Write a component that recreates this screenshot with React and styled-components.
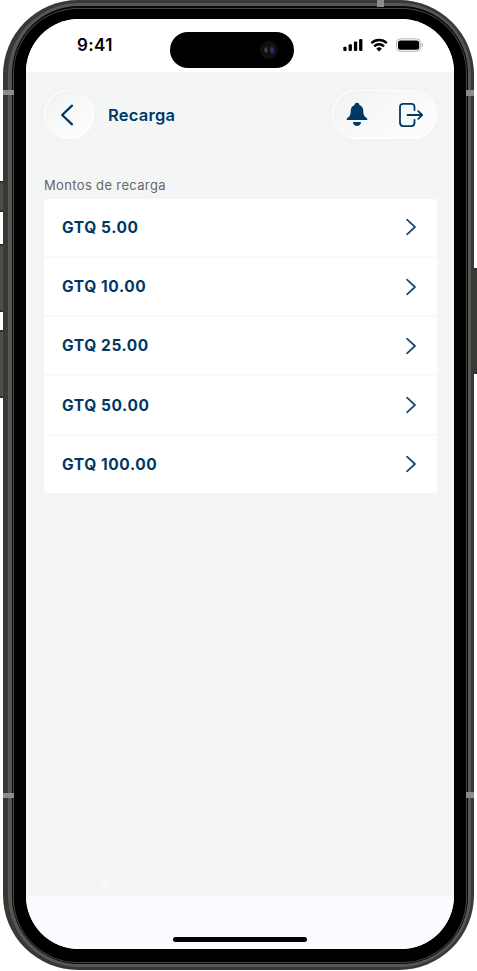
import React from "react";
import styled, { createGlobalStyle } from "styled-components";

const amounts = ["5.00", "10.00", "25.00", "50.00", "100.00"];

export default function App() {
  return (
    <Stage>
      <GlobalStyle />
      <SideButton $side="left" $top={181} $height={31} />
      <SideButton $side="left" $top={244} $height={68} />
      <SideButton $side="left" $top={330} $height={68} />
      <SideButton $side="right" $top={268} $height={106} />
      <Frame>
        <Rim>
          <Groove>
            <Line>
              <Bezel>
                <Screen>
                  <StatusBar>
                    <Clock>9:41</Clock>
                    <Island>
                      <Camera />
                    </Island>
                    <StatusIcons />
                  </StatusBar>
                  <Content>
                    <Header>
                      <BackButton aria-label="Regresar">
                        <svg width="14" height="22" viewBox="0 0 14 22" fill="none" stroke="#003865" strokeWidth="2.3" strokeLinecap="round" strokeLinejoin="round">
                          <path d="M12 1.700 2.200 11l9.800 9.300" />
                        </svg>
                      </BackButton>
                      <Title>Recarga</Title>
                      <Actions>
                        <BellIcon />
                        <LogoutIcon />
                      </Actions>
                    </Header>
                    <Label>Montos de recarga</Label>
                    <List>
                      {amounts.map((amount) => (
                        <Row key={amount}>
                          GTQ {amount}
                          <svg width="12" height="18" viewBox="0 0 12 18" fill="none" stroke="#164672" strokeWidth="1.7" strokeLinecap="round" strokeLinejoin="round">
                            <path d="m2 1.700 8 7.300-8 7.300" />
                          </svg>
                        </Row>
                      ))}
                    </List>
                    <Dot />
                  </Content>
                  <Footer>
                    <HomeBar />
                  </Footer>
                </Screen>
              </Bezel>
            </Line>
          </Groove>
        </Rim>
      </Frame>
      <Antenna $x={3} $y={90} $w={11} $h={5} />
      <Antenna $x={3} $y={793} $w={11} $h={5} />
      <Antenna $x={466} $y={90} $w={8} $h={6} />
      <Antenna $x={466} $y={792} $w={8} $h={6} />
      <Antenna $x={377} $y={0} $w={7} $h={7} />
    </Stage>
  );
}

const StatusIcons = () => (
  <StatusSvg width="82" height="16" viewBox="0 0 82 16">
    <rect x="0.3" y="8.7" width="3.3" height="4.4" rx="1" />
    <rect x="5.6" y="6.2" width="3.3" height="6.9" rx="1" />
    <rect x="10.9" y="3.5" width="3.3" height="9.6" rx="1" />
    <rect x="16.1" y="0.9" width="3.3" height="12.2" rx="1" />
    <g fill="none" stroke="#000" strokeWidth="2.4">
      <path d="M28.4 5.1a11 11 0 0 1 15.4 0" />
      <path d="M31.2 8.3a7 7 0 0 1 9.8 0" />
    </g>
    <path d="M36.1 13.4 33.3 10.7a4 4 0 0 1 5.6 0Z" />
    <rect x="53.5" y="0.9" width="24.200" height="12.4" rx="3.900" fill="none" stroke="#b5b5b5" />
    <rect x="55" y="2.4" width="21.2" height="9.4" rx="2.500" />
    <path d="M78.900 5v4.300c1.300-.5 1.300-3.800 0-4.300Z" fill="#aaa" />
  </StatusSvg>
);

const BellIcon = () => (
  <svg width="22" height="25" viewBox="0 0 22 25" fill="#003865">
    <path d="M11 .8c1.300 0 2.300.8 2.500 2.100 2.400.9 3.800 3.100 3.800 5.900 0 3.500.4 5.100 2.700 6.600 1 .7 1.500 1.400 1.300 2.700H.7c-.2-1.300.3-2 1.300-2.700 2.300-1.500 2.700-3.100 2.700-6.600 0-2.800 1.400-5 3.800-5.900C8.700 1.600 9.700.8 11 .8Z" />
    <path d="M6.900 20.100h8.200c-.3 2.400-1.900 4-4.100 4s-3.800-1.600-4.100-4Z" />
  </svg>
);

const LogoutIcon = () => (
  <svg width="26" height="26" viewBox="0 0 26 26" fill="none" stroke="#003865" strokeWidth="1.8" strokeLinecap="round" strokeLinejoin="round">
    <path d="M16.500 8V5.200q0-3.300-3.300-3.300H5.300Q2 1.900 2 5.200v15.600q0 3.300 3.300 3.300h7.900q3.300 0 3.300-3.300V18" />
    <path d="M9.500 13h14.500M20.200 9.200 24.200 13l-4 3.800" />
  </svg>
);

const GlobalStyle = createGlobalStyle`
  body {
    margin: 0;
    background: #fff;
    font-family: Inter, "Liberation Sans", sans-serif;
  }

  * {
    box-sizing: border-box;
  }
`;

const Stage = styled.div`
  position: relative;
  width: 477px;
  height: 971px;
  padding: 0 3px 1px;
  overflow: hidden;
`;

const SideButton = styled.div`
  position: absolute;
  ${(props) => props.$side}: 0;
  top: ${(props) => props.$top}px;
  width: 7px;
  height: ${(props) => props.$height}px;
  background: linear-gradient(90deg, #4d4c49 0 2px, #575653 2px 4px, #3b3a38 4px);
  border: solid #30302d;
  border-width: 2px 0;
`;

const Frame = styled.div`
  position: relative;
  width: 471px;
  height: 970px;
  padding: 3px 3px 3px 5px;
  border-radius: 75px;
  background: #393835;
`;

const Rim = styled.div`
  height: 100%;
  padding: 3px 3px 3px 4px;
  border-radius: 71px;
  background: #575653;
`;

const Groove = styled.div`
  height: 100%;
  padding: 2px 1px 1px;
  border-radius: 67px;
  background: #080808;
`;

const Line = styled.div`
  height: 100%;
  padding: 1px;
  border-radius: 65px;
  background: #454543;
`;

const Bezel = styled.div`
  height: 100%;
  padding: 10px 12px 13px;
  border-radius: 64px;
  background: #000;
`;

const Screen = styled.div`
  display: flex;
  flex-direction: column;
  width: 428px;
  height: 930px;
  border-radius: 53px;
  overflow: hidden;
  background: #f4f6f6;
`;

const StatusBar = styled.div`
  display: flex;
  flex: none;
  height: 53px;
  background: #fff;
`;

const Clock = styled.div`
  width: 144px;
  padding: 16px 0 0 51px;
  font-size: 17px;
  font-weight: 600;
  line-height: 21px;
  letter-spacing: 0.4px;
`;

const Island = styled.div`
  display: flex;
  align-items: center;
  justify-content: flex-end;
  width: 124px;
  height: 36px;
  margin-top: 13px;
  padding-right: 16px;
  border-radius: 18px;
  background: #000;
`;

const Camera = styled.div`
  width: 18px;
  height: 18px;
  border-radius: 50%;
  background: 
    radial-gradient(ellipse 2px 4px at 6px 9px, #59636f, transparent),
    radial-gradient(ellipse 3px 5px at 12px 9px, #2a4588, transparent),
    #101011;
`;

const StatusSvg = styled.svg`
  margin: 19px 0 0 49px;
`;

const Content = styled.div`
  flex: 1;
  padding: 18px 17px 0 18px;
`;

const Header = styled.div`
  display: flex;
  align-items: center;
  height: 49px;
`;

const raised = `
  background: linear-gradient(145deg, #f3f5f5 15%, #fcfcfc 80%);
  box-shadow: 0 0 18px rgba(0, 0, 0, 0.018), inset 1px 1px 1px #fff, inset 3px 3px 4px rgba(0, 0, 0, 0.012), inset -1px -1px 2px #fff;
`;

const BackButton = styled.button`
  display: flex;
  align-items: center;
  justify-content: center;
  width: 50px;
  height: 49px;
  padding: 0 4px 0 0;
  border: 0;
  border-radius: 25px;
  ${raised}
`;

const Title = styled.h1`
  flex: 1;
  margin: 0 0 0 14px;
  color: #003865;
  font-size: 16.5px;
  font-weight: 600;
  letter-spacing: 0.25px;
`;

const Actions = styled.div`
  display: flex;
  align-items: center;
  justify-content: space-between;
  width: 105px;
  height: 49px;
  padding: 0 13px 0 14px;
  border-radius: 25px;
  ${raised}
`;

const Label = styled.div`
  margin-top: 37px;
  height: 22.6px;
  color: #666;
  font-size: 13px;
  line-height: 18px;
  letter-spacing: 0.35px;
`;

const List = styled.div`
  display: flex;
  flex-direction: column;
  gap: 2px;
  height: 294.4px;
  background: #f8f9f9;
`;

const Row = styled.div`
  display: flex;
  flex: 1;
  align-items: center;
  justify-content: space-between;
  padding: 0 20px 0 18px;
  border-radius: 2px;
  background: #fff;
  color: #003865;
  font-size: 15.5px;
  font-weight: 700;
  letter-spacing: 0.58px;
`;

const Dot = styled.div`
  width: 8px;
  height: 8px;
  margin: 387px 0 0 57px;
  border-radius: 50%;
  background: #f7f8f8;
`;

const Footer = styled.div`
  display: flex;
  align-items: flex-end;
  justify-content: center;
  flex: none;
  height: 53px;
  padding-bottom: 7px;
  background: #fafbff;
`;

const HomeBar = styled.div`
  width: 134px;
  height: 5px;
  border-radius: 3px;
  background: #000;
`;

const Antenna = styled.div`
  position: absolute;
  left: ${(props) => props.$x}px;
  top: ${(props) => props.$y}px;
  width: ${(props) => props.$w}px;
  height: ${(props) => props.$h}px;
  background: #8b8b89;
`;
